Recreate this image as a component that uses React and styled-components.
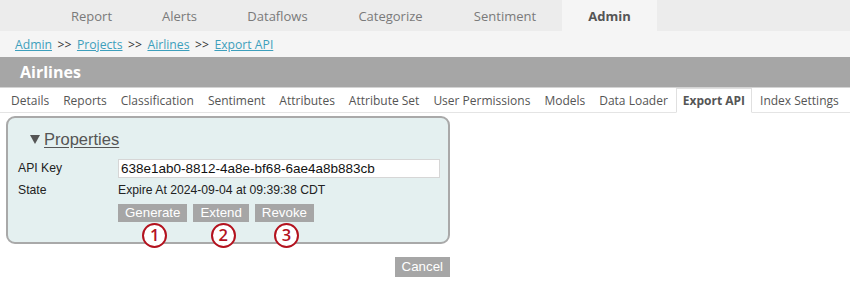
import React from 'react'
import styled, { createGlobalStyle } from 'styled-components'

const Global = createGlobalStyle`
    body {
        margin:0;
        background:#fff;
        font-family:"Open Sans", sans-serif;
    }
`;

const Page = styled.div`
    width:850px;
    height:286px;
    overflow:hidden;
`;

const TopNav = styled.div`
    display:flex;
    height:31px;
    background-color:#ececec;
    padding-left:46px;
`;

const NavItem = styled.div`
    display:flex;
    align-items:center;
    justify-content:center;
    width:${p => p.w}px;
    font-size:13px;
    color:${p => p.active ? '#555' : '#7a7a7a'};
    font-weight:${p => p.active ? 700 : 400};
    background-color:${p => p.active ? '#f5f5f5' : 'transparent'};
`;

const Crumbs = styled.div`
    height:26px;
    display:flex;
    align-items:center;
    padding-left:15px;
    background-color:#f5f5f5;
    font-size:12.2px;
    color:#333;
    gap:5.5px;
`;

const Crumb = styled.a`
    color:#3d9fbc;
    text-decoration:underline;
`;

const TitleBar = styled.div`
    height:30px;
    background-color:#a6a6a6;
    display:flex;
    align-items:center;
    padding-left:20px;
    color:#fff;
    font-weight:700;
    font-size:16px;
    border-bottom:1px solid #d4d4d4;
`;

const SubTabs = styled.div`
    display:flex;
    height:24px;
    padding-left:4px;
    border-bottom:1px solid #e4e4e4;
`;

const SubTab = styled.div`
    display:flex;
    align-items:center;
    padding:0 6px;
    font-size:12px;
    color:#555;
    font-weight:${p => p.active ? 700 : 400};
    border:1px solid ${p => p.active ? '#e0e0e0' : 'transparent'};
    border-bottom:${p => p.active ? '1px solid #fff' : 'none'};
    margin:0 ${p => p.active ? 1 : 0}px ${p => p.active ? '-1px' : '0'};
    background:#fff;
`;

const Body = styled.div`
    width:444px;
    padding:3px 0 0 6px;
    display:flex;
    flex-direction:column;
    font-family:"Liberation Sans", Arial, sans-serif;
`;

const Panel = styled.div`
    box-sizing:border-box;
    background-color:#e4f0f0;
    border:2px solid #a9a9a9;
    border-radius:9px;
    padding:11px 8px 0 10px;
    height:128px;
`;

const Legend = styled.div`
    display:flex;
    align-items:center;
    gap:4px;
    height:20px;
    margin-left:12px;
    margin-bottom:8px;
    font-size:16.5px;
    color:#555;
    span {
        text-decoration:underline;
        text-underline-offset:2px;
    }
`;

const Arrow = styled.svg`
    width:10px;
    height:9px;
`;

const Row = styled.div`
    display:flex;
    align-items:center;
    height:22px;
    font-size:12.2px;
    color:#222;
`;

const Label = styled.div`
    width:100px;
`;

const KeyInput = styled.div`
    width:318px;
    height:17px;
    background:#fff;
    border:1px solid #d6d6d6;
    font-size:13.5px;
    line-height:17px;
    padding-left:2px;
    color:#111;
`;

const Buttons = styled.div`
    display:flex;
    gap:6px;
    margin-left:100px;
    margin-top:3px;
`;

const Col = styled.div`
    display:flex;
    flex-direction:column;
    align-items:center;
`;

const Btn = styled.div`
    background-color:#a6a6a6;
    color:#fff;
    font-size:13.3px;
    height:${p => p.h || 18}px;
    line-height:${p => p.h || 18}px;
    padding:0 7px;
`;

const Badge = styled.div`
    box-sizing:border-box;
    width:25px;
    height:25px;
    border:2.5px solid #b3121e;
    border-radius:50%;
    background:#fff;
    color:#b3121e;
    font-family:"Open Sans", sans-serif;
    font-weight:600;
    font-size:16.5px;
    line-height:20px;
    text-align:center;
    margin:1px 0 0 4px;
`;

const Footer = styled.div`
    display:flex;
    justify-content:flex-end;
    margin-top:13px;
`;

const nav = [
    ['Report', 91], ['Alerts', 85], ['Dataflows', 111], ['Categorize', 115],
    ['Sentiment', 114], ['Admin', 95, true],
];

const tabs = ['Details', 'Reports', 'Classification', 'Sentiment', 'Attributes',
    'Attribute Set', 'User Permissions', 'Models', 'Data Loader', 'Export API', 'Index Settings'];

const App = () => {
    return (
        <Page>
            <Global />
            <TopNav>
                {nav.map(([t, w, a]) => (
                    <NavItem key={t} w={w} active={a}>{t}</NavItem>
                ))}
            </TopNav>
            <Crumbs>
                <Crumb>Admin</Crumb>&gt;&gt;
                <Crumb>Projects</Crumb>&gt;&gt;
                <Crumb>Airlines</Crumb>&gt;&gt;
                <Crumb>Export API</Crumb>
            </Crumbs>
            <TitleBar>Airlines</TitleBar>
            <SubTabs>
                {tabs.map(t => (
                    <SubTab key={t} active={t === 'Export API'}>{t}</SubTab>
                ))}
            </SubTabs>
            <Body>
                <Panel>
                    <Legend>
                        <Arrow viewBox="0 0 10 9"><path d="M0 0 L10 0 L5 9 Z" fill="#555" /></Arrow>
                        <span>Properties</span>
                    </Legend>
                    <Row>
                        <Label>API Key</Label>
                        <KeyInput>638e1ab0-8812-4a8e-bf68-6ae4a8b883cb</KeyInput>
                    </Row>
                    <Row>
                        <Label>State</Label>
                        Expire At 2024-09-04 at 09:39:38 CDT
                    </Row>
                    <Buttons>
                        <Col><Btn>Generate</Btn><Badge>1</Badge></Col>
                        <Col><Btn>Extend</Btn><Badge>2</Badge></Col>
                        <Col><Btn>Revoke</Btn><Badge>3</Badge></Col>
                    </Buttons>
                </Panel>
                <Footer>
                    <Btn h={20}>Cancel</Btn>
                </Footer>
            </Body>
        </Page>
    )
}

export default App
